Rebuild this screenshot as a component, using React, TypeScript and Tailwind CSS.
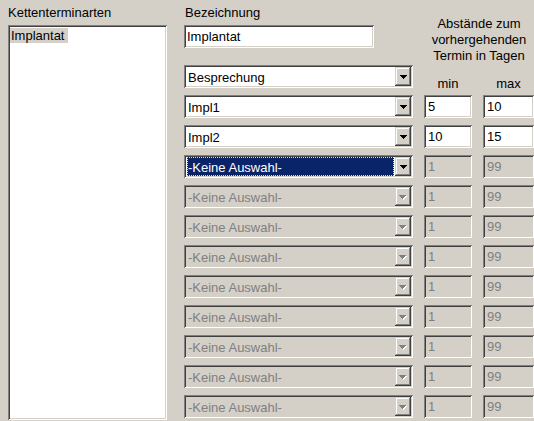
import React from "react";

type RowState = "normal" | "selected" | "disabled";

interface Row {
  text: string;
  state: RowState;
  min?: string;
  max?: string;
  numDisabled?: boolean;
}

const rows: Row[] = [
  { text: "Besprechung", state: "normal" },
  { text: "Impl1", state: "normal", min: "5", max: "10" },
  { text: "Impl2", state: "normal", min: "10", max: "15" },
  { text: "-Keine Auswahl-", state: "selected", min: "1", max: "99", numDisabled: true },
  ...Array.from({ length: 8 }, () => ({
    text: "-Keine Auswahl-",
    state: "disabled" as RowState,
    min: "1",
    max: "99",
    numDisabled: true,
  })),
];

function Arrow({ disabled }: { disabled: boolean }) {
  if (disabled) {
    return (
      <svg width="8" height="5" viewBox="0 0 8 5" shapeRendering="crispEdges" className="mt-[1px]">
        <path d="M1 1h7v1H1z M2 2h5v1H2z M3 3h3v1H3z M4 4h1v1H4z" fill="#ffffff" />
        <path d="M0 0h7v1H0z M1 1h5v1H1z M2 2h3v1H2z M3 3h1v1H3z" fill="#808080" />
      </svg>
    );
  }
  return (
    <svg width="7" height="4" viewBox="0 0 7 4" shapeRendering="crispEdges">
      <path d="M0 0h7v1H0z M1 1h5v1H1z M2 2h3v1H2z M3 3h1v1H3z" fill="#000000" />
    </svg>
  );
}

function Combo({ text, state }: { text: string; state: RowState }) {
  const disabled = state === "disabled";
  const selected = state === "selected";
  return (
    <div
      className={`w-[229px] h-[23px] p-[2px] flex shrink-0 shadow-[inset_1px_1px_0_#808080,inset_-1px_-1px_0_#ffffff,inset_2px_2px_0_#404040,inset_-2px_-2px_0_#d4d0c8] ${
        disabled ? "bg-[#d4d0c8] text-[#808080]" : "bg-white text-black"
      }`}
    >
      <div className="flex-1 min-w-0 h-full pl-[1px] pr-[1px]">
        <div
          className={`h-full w-full flex items-center pt-[2px] border whitespace-nowrap overflow-hidden ${
            selected ? "bg-[#0a246a] text-white border-dotted border-[#f5db95]" : "border-transparent"
          }`}
        >
          {text}
        </div>
      </div>
      <div className="w-[16px] h-[19px] bg-[#d4d0c8] flex items-center justify-center shadow-[inset_-1px_-1px_0_#404040,inset_1px_1px_0_#d4d0c8,inset_-2px_-2px_0_#808080,inset_2px_2px_0_#ffffff]">
        <Arrow disabled={disabled} />
      </div>
    </div>
  );
}

function Num({ value, disabled, wide }: { value: string; disabled?: boolean; wide?: boolean }) {
  return (
    <div
      className={`${wide ? "w-[51px]" : "w-[48px]"} h-[23px] pl-[4px] pt-[4px] shrink-0 shadow-[inset_1px_1px_0_#808080,inset_-1px_-1px_0_#ffffff,inset_2px_2px_0_#404040,inset_-2px_-2px_0_#d4d0c8] ${
        disabled ? "bg-[#d4d0c8] text-[#808080]" : "bg-white text-black"
      }`}
    >
      {value}
    </div>
  );
}

export default function App() {
  return (
    <div className="w-[534px] h-[421px] bg-[#d4d0c8] flex overflow-hidden font-['Liberation_Sans',Arial,sans-serif] text-[13px] leading-[16px] text-black">
      {/* Left column */}
      <div className="ml-[8px] w-[159px] flex flex-col pt-[5px] shrink-0">
        <div>Kettenterminarten</div>
        <div className="mt-[4px] h-[395px] bg-white p-[2px] shadow-[inset_1px_1px_0_#808080,inset_-1px_-1px_0_#ffffff,inset_2px_2px_0_#404040,inset_-2px_-2px_0_#d4d0c8]">
          <div className="mt-[1px] w-fit bg-[#d4d0c8] pl-[1px] pr-[4px] leading-[15px]">Implantat</div>
        </div>
      </div>

      {/* Right area */}
      <div className="ml-[17px] flex flex-col shrink-0">
        <div className="flex h-[65px]">
          <div className="w-[229px] flex flex-col pt-[5px]">
            <div className="pl-[1px]">Bezeichnung</div>
            <div className="mt-[4px] w-[190px] h-[23px] bg-white pl-[3px] pt-[4px] shadow-[inset_1px_1px_0_#808080,inset_-1px_-1px_0_#ffffff,inset_2px_2px_0_#404040,inset_-2px_-2px_0_#d4d0c8]">
              Implantat
            </div>
          </div>
          <div className="ml-[11px] w-[110px] pt-[16px] text-center">
            Abstände zum
            <br />
            vorhergehenden
            <br />
            Termin in Tagen
          </div>
        </div>

        <div className="flex flex-col gap-[7px]">
          {rows.map((r, i) => (
            <div key={i} className="flex h-[23px] gap-[11px]">
              <Combo text={r.text} state={r.state} />
              {i === 0 ? (
                <>
                  <div className="w-[48px] h-[23px] pt-[11px] text-center">min</div>
                  <div className="w-[51px] h-[23px] pt-[11px] text-center">max</div>
                </>
              ) : (
                <>
                  <Num value={r.min ?? ""} disabled={r.numDisabled} />
                  <Num value={r.max ?? ""} disabled={r.numDisabled} wide />
                </>
              )}
            </div>
          ))}
        </div>
      </div>
    </div>
  );
}
